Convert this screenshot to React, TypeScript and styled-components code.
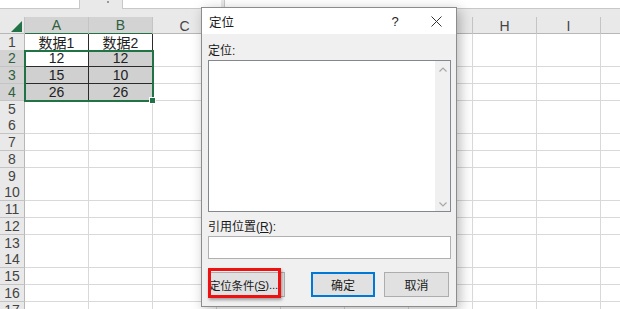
import React from "react";
import styled, { createGlobalStyle } from "styled-components";

const GlobalStyle = createGlobalStyle`
  html, body {
    margin: 0;
    padding: 0;
    background: #ffffff;
    overflow: hidden;
  }
  body {
    font-family: "Liberation Sans", "Noto Sans CJK SC", sans-serif;
  }
`;

const COLS = ["A", "B", "C", "D", "E", "F", "G", "H", "I", ""];
const SELECTED_COLS = ["A", "B"];
const SELECTED_ROWS = [2, 3, 4];

type CellData = { text: string; boxed?: boolean; shaded?: boolean };

const data: Record<number, CellData[]> = {
  1: [{ text: "数据1", boxed: true }, { text: "数据2", boxed: true }],
  2: [{ text: "12", boxed: true }, { text: "12", boxed: true, shaded: true }],
  3: [
    { text: "15", boxed: true, shaded: true },
    { text: "10", boxed: true, shaded: true },
  ],
  4: [
    { text: "26", boxed: true, shaded: true },
    { text: "26", boxed: true, shaded: true },
  ],
};

const Screen = styled.div`
  position: relative;
  width: 620px;
  height: 309px;
  overflow: hidden;
  background: #ffffff;
`;

const FormulaBar = styled.div`
  display: flex;
  align-items: flex-start;
  height: 17px;
  background: #e9e9e9;
`;

const NameBox = styled.div`
  width: 79px;
  height: 8px;
  background: #ffffff;
  border-right: 1px solid #c8c8c8;
  border-bottom: 1px solid #c8c8c8;
`;

const Splitter = styled.div`
  width: 42px;
  display: flex;
  justify-content: center;
  padding-left: 14px;
  box-sizing: border-box;
  &::before {
    content: "";
    width: 2px;
    height: 2px;
    margin-top: 1px;
    background: #9a9a9a;
  }
`;

const FxBox = styled.div<{ $grow?: boolean }>`
  height: 8px;
  background: #ffffff;
  border-left: 1px solid #c8c8c8;
  border-bottom: 1px solid #c8c8c8;
  ${(p) => (p.$grow ? "flex: 1; margin-left: 3px;" : "width: 98px;")}
`;

const Grid = styled.div`
  position: relative;
`;

const HeaderRow = styled.div`
  display: grid;
  grid-template-columns: 25px repeat(10, 64px);
  height: 16.5px;
  box-sizing: border-box;
  background: #e9e9e9;
  border-bottom: 1px solid #b7b7b7;
`;

const Corner = styled.div`
  position: relative;
  border-right: 1px solid #c4c4c4;
  &::after {
    content: "";
    position: absolute;
    right: 2px;
    bottom: 2px;
    border-style: solid;
    border-width: 0 0 11px 11px;
    border-color: transparent transparent #217346 transparent;
  }
`;

const ColHead = styled.div<{ $selected: boolean }>`
  display: flex;
  align-items: center;
  justify-content: center;
  box-sizing: border-box;
  border-right: 1px solid #c4c4c4;
  background: ${(p) => (p.$selected ? "#d3d3d3" : "transparent")};
  border-bottom: ${(p) => (p.$selected ? "2px solid #217346" : "none")};
  margin-bottom: ${(p) => (p.$selected ? "-1px" : "0")};
  font-size: 14px;
  color: ${(p) => (p.$selected ? "#2f5f3f" : "#444444")};
`;

const SheetRow = styled.div`
  display: grid;
  grid-template-columns: 25px repeat(10, 64px);
  height: 16.78px;
`;

const RowHead = styled.div<{ $selected: boolean }>`
  display: flex;
  align-items: center;
  justify-content: center;
  box-sizing: border-box;
  background: ${(p) => (p.$selected ? "#d3d3d3" : "#e9e9e9")};
  border-bottom: 1px solid #c4c4c4;
  border-right: 1px solid #b7b7b7;
  font-size: 14px;
  color: ${(p) => (p.$selected ? "#2f5f3f" : "#444444")};
`;

const Cell = styled.div<{ $boxed?: boolean; $shaded?: boolean }>`
  display: flex;
  align-items: center;
  justify-content: center;
  box-sizing: border-box;
  border-right: 1px solid ${(p) => (p.$boxed ? "#2b2b2b" : "#d9d9d9")};
  border-bottom: 1px solid ${(p) => (p.$boxed ? "#2b2b2b" : "#d9d9d9")};
  background: ${(p) => (p.$shaded ? "#d0d0d0" : "#ffffff")};
  font-size: 14px;
  color: #222222;
  white-space: nowrap;
  overflow: hidden;
`;

const Selection = styled.div`
  position: absolute;
  left: 24px;
  top: 32.5px;
  width: 130px;
  height: 52px;
  box-sizing: border-box;
  border: 2px solid #217346;
  pointer-events: none;
  &::after {
    content: "";
    position: absolute;
    right: -4px;
    bottom: -4px;
    width: 5px;
    height: 5px;
    background: #217346;
    border: 1px solid #ffffff;
  }
`;

const Dialog = styled.div`
  position: absolute;
  left: 201px;
  top: 7px;
  width: 256px;
  height: 300px;
  box-sizing: border-box;
  border: 1px solid #8c8c8c;
  background: #f0f0f0;
  box-shadow: 3px 3px 12px rgba(0, 0, 0, 0.28);
  display: flex;
  flex-direction: column;
  font-family: "Liberation Sans", "Noto Sans CJK SC", sans-serif;
  font-size: 12px;
  color: #1a1a1a;
`;

const TitleBar = styled.div`
  height: 26px;
  background: #ffffff;
  display: flex;
  align-items: center;
  padding-left: 7px;
  font-size: 12.5px;
`;

const TitleText = styled.div`
  flex: 1;
`;

const TitleButton = styled.div<{ $w: number }>`
  width: ${(p) => p.$w}px;
  display: flex;
  justify-content: center;
  align-items: center;
  font-size: 13px;
  color: #222;
`;

const Body = styled.div`
  flex: 1;
  display: flex;
  flex-direction: column;
  padding: 9px 5px 0 6px;
`;

const Label = styled.div`
  height: 16px;
  line-height: 16px;
  margin-bottom: 1px;
  font-size: 12px;
  u {
    text-decoration: underline;
  }
`;

const ListBox = styled.div`
  height: 152px;
  box-sizing: border-box;
  border: 1px solid #828790;
  background: #ffffff;
  display: flex;
  justify-content: flex-end;
  margin-bottom: 7px;
`;

const ScrollTrack = styled.div`
  width: 15px;
  background: #f0f0f0;
  display: flex;
  flex-direction: column;
  justify-content: space-between;
  align-items: center;
  padding: 6px 0 4px;
`;

const InputBox = styled.div`
  height: 23px;
  box-sizing: border-box;
  border: 1px solid #b0b0b0;
  background: #ffffff;
`;

const ButtonRow = styled.div`
  display: flex;
  margin-top: 13px;
  position: relative;
`;

const Button = styled.div<{
  $w: number;
  $primary?: boolean;
  $gap?: number;
  $compact?: boolean;
}>`
  flex: 0 0 ${(p) => p.$w}px;
  width: ${(p) => p.$w}px;
  height: 25px;
  box-sizing: border-box;
  margin-left: ${(p) => p.$gap ?? 0}px;
  padding-right: ${(p) => (p.$compact ? "6px" : "0")};
  border: 1px solid ${(p) => (p.$primary ? "#0078d7" : "#adadad")};
  box-shadow: ${(p) => (p.$primary ? "inset 0 0 0 1px #0078d7" : "none")};
  background: #e1e1e1;
  display: flex;
  align-items: center;
  justify-content: center;
  font-size: ${(p) => (p.$compact ? "11.5px" : "12px")};
  letter-spacing: ${(p) => (p.$compact ? "-0.2px" : "0")};
  white-space: nowrap;
  overflow: hidden;
  u {
    text-decoration: underline;
  }
`;

const Highlight = styled.div`
  position: absolute;
  left: 0;
  top: -4px;
  width: 73px;
  height: 30px;
  box-sizing: border-box;
  border: 3px solid #ee1111;
  box-shadow: 1px 2px 3px rgba(0, 0, 0, 0.35);
  pointer-events: none;
`;

const Chevron = ({ up }: { up?: boolean }) => (
  <svg width="8" height="5" viewBox="0 0 8 5">
    <path
      d={up ? "M0.5 4.5 L4 1 L7.5 4.5" : "M0.5 0.5 L4 4 L7.5 0.5"}
      fill="none"
      stroke="#a8a8a8"
      strokeWidth="1.2"
    />
  </svg>
);

const CloseIcon = () => (
  <svg width="11" height="11" viewBox="0 0 11 11">
    <path d="M0.5 0.5 L10.5 10.5 M10.5 0.5 L0.5 10.5" stroke="#333" strokeWidth="1" />
  </svg>
);

export default function App() {
  const rows = Array.from({ length: 17 }, (_, i) => i + 1);
  return (
    <Screen>
      <GlobalStyle />
      <FormulaBar>
        <NameBox />
        <Splitter />
        <FxBox />
        <FxBox $grow />
      </FormulaBar>
      <Grid>
        <HeaderRow>
          <Corner />
          {COLS.map((c, i) => (
            <ColHead key={i} $selected={SELECTED_COLS.includes(c)}>
              {c}
            </ColHead>
          ))}
        </HeaderRow>
        {rows.map((r) => (
          <SheetRow key={r}>
            <RowHead $selected={SELECTED_ROWS.includes(r)}>{r}</RowHead>
            {COLS.map((c, ci) => {
              const cell = data[r]?.[ci];
              return (
                <Cell key={ci} $boxed={cell?.boxed} $shaded={cell?.shaded}>
                  {cell?.text}
                </Cell>
              );
            })}
          </SheetRow>
        ))}
        <Selection />
      </Grid>

      <Dialog>
        <TitleBar>
          <TitleText>定位</TitleText>
          <TitleButton $w={42}>?</TitleButton>
          <TitleButton $w={40}>
            <CloseIcon />
          </TitleButton>
        </TitleBar>
        <Body>
          <Label>定位:</Label>
          <ListBox>
            <ScrollTrack>
              <Chevron up />
              <Chevron />
            </ScrollTrack>
          </ListBox>
          <Label>
            引用位置(<u>R</u>):
          </Label>
          <InputBox />
          <ButtonRow>
            <Button $w={77} $compact>
              定位条件(<u>S</u>)...
            </Button>
            <Button $w={64} $gap={26} $primary>
              确定
            </Button>
            <Button $w={65} $gap={9}>
              取消
            </Button>
            <Highlight />
          </ButtonRow>
        </Body>
      </Dialog>
    </Screen>
  );
}
